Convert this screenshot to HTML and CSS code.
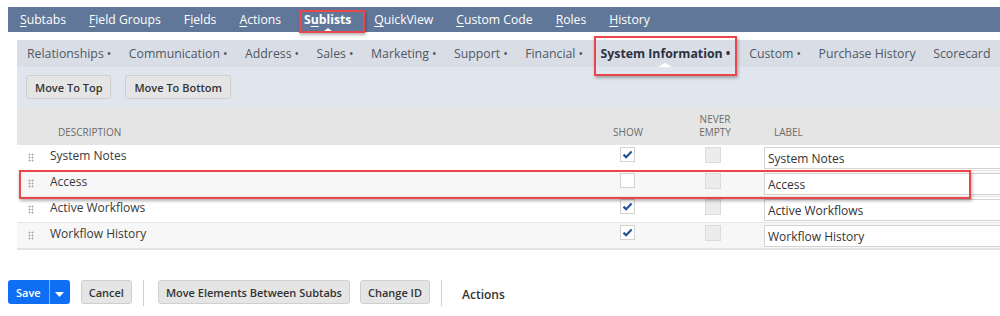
FILE: index.html
```html
<!DOCTYPE html>
<html lang="en">

<head>
    <meta charset="UTF-8">
    <meta name="viewport" content="width=device-width, initial-scale=1.0">
    <title>Sublists</title>
    <link rel="stylesheet" href="styles.css">
</head>

<body>

    <div class="tabs">
        <a class="tab"><u>S</u>ubtabs</a>
        <a class="tab"><u>F</u>ield Groups</a>
        <a class="tab">F<u>i</u>elds</a>
        <a class="tab"><u>A</u>ctions</a>
        <a class="tab active marked">S<u>u</u>blists</a>
        <a class="tab"><u>Q</u>uickView</a>
        <a class="tab"><u>C</u>ustom Code</a>
        <a class="tab"><u>R</u>oles</a>
        <a class="tab"><u>H</u>istory</a>
    </div>

    <div class="panel">
        <div class="subtabs">
            <span class="subtab">Relationships<i>&bull;</i></span>
            <span class="subtab">Communication<i>&bull;</i></span>
            <span class="subtab">Address<i>&bull;</i></span>
            <span class="subtab">Sales<i>&bull;</i></span>
            <span class="subtab">Marketing<i>&bull;</i></span>
            <span class="subtab">Support<i>&bull;</i></span>
            <span class="subtab">Financial<i>&bull;</i></span>
            <span class="subtab active marked">System Information<i>&bull;</i></span>
            <span class="subtab">Custom<i>&bull;</i></span>
            <span class="subtab">Purchase History</span>
            <span class="subtab">Scorecard</span>
        </div>
        <div class="toolbar">
            <button class="btn">Move To Top</button>
            <button class="btn">Move To Bottom</button>
        </div>

        <div class="grid">
            <table>
                <thead>
                    <tr>
                        <th class="col-drag"></th>
                        <th class="col-desc">Description</th>
                        <th class="col-show">Show</th>
                        <th class="col-never">Never<br>Empty</th>
                        <th class="col-label">Label</th>
                    </tr>
                </thead>
                <tbody>
                    <tr>
                        <td class="col-drag"><span class="handle"></span></td>
                        <td>System Notes</td>
                        <td class="col-show"><span class="check on"></span></td>
                        <td class="col-never"><span class="check off"></span></td>
                        <td><input class="label-input" type="text" value="System Notes"></td>
                    </tr>
                    <tr class="alt">
                        <td class="col-drag"><span class="handle"></span></td>
                        <td>Access</td>
                        <td class="col-show"><span class="check"></span></td>
                        <td class="col-never"><span class="check off"></span></td>
                        <td><input class="label-input" type="text" value="Access"></td>
                    </tr>
                    <tr>
                        <td class="col-drag"><span class="handle"></span></td>
                        <td>Active Workflows</td>
                        <td class="col-show"><span class="check on"></span></td>
                        <td class="col-never"><span class="check off"></span></td>
                        <td><input class="label-input" type="text" value="Active Workflows"></td>
                    </tr>
                    <tr class="alt">
                        <td class="col-drag"><span class="handle"></span></td>
                        <td>Workflow History</td>
                        <td class="col-show"><span class="check on"></span></td>
                        <td class="col-never"><span class="check off"></span></td>
                        <td><input class="label-input" type="text" value="Workflow History"></td>
                    </tr>
                </tbody>
            </table>
            <div class="row-mark"></div>
        </div>
    </div>

    <div class="actions">
        <div class="save">
            <button class="save-main">Save</button>
            <button class="save-arrow"><svg width="9" height="5" viewBox="0 0 9 5"><path d="M0 0h9L4.5 5z" fill="#fff"/></svg></button>
        </div>
        <button class="btn">Cancel</button>
        <span class="sep"></span>
        <button class="btn">Move Elements Between Subtabs</button>
        <button class="btn">Change ID</button>
        <span class="sep"></span>
        <span class="menu">Actions</span>
    </div>

</body>

</html>
```

FILE: styles.css
```css
body {
    font-family: 'Open Sans', 'Liberation Sans', sans-serif;
    margin: 0;
    background-color: #fff;
    color: #333;
    width: 1000px;
    height: 316px;
    overflow: hidden;
}

/* top tabs */
.tabs {
    display: flex;
    margin: 7px 0 0 8px;
    height: 25px;
    padding-left: 0.5px;
    background-color: #607799;
    white-space: nowrap;
}

.tab {
    position: relative;
    padding: 0 11.5px;
    font-size: 12.2px;
    line-height: 25px;
    color: #fff;
}

.tab u {
    text-decoration-thickness: 1px;
    text-underline-offset: 2px;
}

.tab.active {
    font-weight: bold;
}

.tab.active::before {
    content: '';
    position: absolute;
    left: 50%;
    bottom: 0;
    margin-left: -5px;
    border-left: 5px solid transparent;
    border-right: 5px solid transparent;
    border-bottom: 4px solid #fff;
}

.marked::after {
    content: '';
    position: absolute;
    border: 2px solid #e9474b;
    box-shadow: 1px 2px 3px rgba(0, 0, 0, 0.3);
}

.tab.marked::after {
    left: 6px;
    right: -2px;
    top: 3px;
    bottom: -1px;
}

/* panel */
.panel {
    margin: 8px 0 0 17px;
    width: 1100px;
}

.subtabs {
    display: flex;
    height: 27px;
    padding-left: 10px;
    background-color: #d9dee6;
    white-space: nowrap;
}

.subtab {
    position: relative;
    margin-right: 17.5px;
    font-size: 12.3px;
    line-height: 27px;
    color: #505863;
}

.subtab i {
    font-style: normal;
    font-size: 12px;
    margin-left: 3px;
}

.subtab.active {
    font-weight: bold;
    color: #2b3240;
    margin-right: 19px;
}

.subtab.active::before {
    content: '';
    position: absolute;
    left: 50%;
    bottom: 0;
    margin-left: -7px;
    border-left: 7px solid transparent;
    border-right: 7px solid transparent;
    border-bottom: 4px solid #fff;
}

.subtab.marked::after {
    left: -7px;
    right: -7px;
    top: -4px;
    bottom: -9px;
}

.toolbar {
    display: flex;
    gap: 14px;
    padding: 8px 9px 9px;
    background-color: #e1e6ee;
}

.btn {
    font-family: inherit;
    font-size: 11px;
    font-weight: 600;
    color: #333;
    height: 24px;
    padding: 0 7px;
    background-color: #e5e5e5;
    border: 1px solid #cfcfcf;
    border-radius: 3px;
}

.toolbar .btn {
    padding: 0 8px;
}

/* grid */
.grid {
    position: relative;
}

table {
    width: 100%;
    border-collapse: collapse;
    font-size: 12px;
    border-bottom: 2px solid #e3e3e3;
}

th {
    height: 31px;
    padding: 0 0 6px;
    background-color: #e5e5e5;
    font-size: 10px;
    font-weight: normal;
    color: #6b6b6b;
    text-transform: uppercase;
    text-align: left;
    vertical-align: bottom;
    line-height: 13px;
}

td {
    height: 25px;
    padding: 0;
    border-bottom: 1px solid #e6e6e6;
    vertical-align: top;
    line-height: 21px;
    color: #3a3a3a;
}

tr.alt td {
    background-color: #f7f7f7;
}

.col-drag {
    width: 33px;
}

.col-desc {
    width: 542px;
}

th.col-desc {
    padding-left: 8px;
    width: 534px;
}

.col-show,
.col-never {
    text-align: center;
}

.col-show {
    width: 70px;
}

th.col-show {
    padding-left: 2px;
    width: 68px;
}

.col-never {
    width: 102px;
}

th.col-never {
    padding-left: 4px;
    width: 98px;
}

th.col-label {
    padding-left: 10px;
}

.handle {
    display: block;
    width: 6px;
    height: 9px;
    margin: 8px 0 0 11px;
    background-image: radial-gradient(circle, #a8a8a8 0.9px, transparent 1.1px);
    background-size: 3px 3px;
}

.check {
    display: inline-block;
    width: 15px;
    height: 15px;
    margin-top: 2px;
    border: 1px solid #d2d2d2;
    background-color: #fff;
    box-sizing: border-box;
    vertical-align: top;
}

.check.on {
    background: #fff url("data:image/svg+xml,%3Csvg xmlns='http://www.w3.org/2000/svg' width='11' height='11' viewBox='0 0 11 11'%3E%3Cpath d='M1.5 5.6l2.6 2.6L9.6 2.4' fill='none' stroke='%23255392' stroke-width='2.2'/%3E%3C/svg%3E") center no-repeat;
}

.check.off {
    width: 16px;
    height: 16px;
    background-color: #ececec;
    border-color: #dcdcdc;
}

.label-input {
    display: block;
    box-sizing: border-box;
    width: 100%;
    height: 22px;
    margin-top: 2px;
    padding: 0 3px;
    border: 1px solid #d3d3d3;
    font-family: inherit;
    font-size: 12px;
    color: #333;
    background-color: #fff;
}

.row-mark {
    position: absolute;
    left: 2px;
    top: 62px;
    width: 948px;
    height: 25px;
    border: 2px solid #e9474b;
    box-shadow: 1px 2px 3px rgba(0, 0, 0, 0.3);
    pointer-events: none;
}

/* bottom actions */
.actions {
    display: flex;
    align-items: center;
    gap: 10px;
    margin: 28px 0 0 8px;
}

.save {
    display: flex;
    height: 24px;
    margin-right: 1px;
    border-radius: 3px;
    overflow: hidden;
}

.save button {
    border: none;
    background-color: #0e6ef4;
    color: #fff;
    font-family: inherit;
    font-size: 11px;
    font-weight: 600;
}

.save-main {
    padding: 0 8px;
    border-right: 1px solid #7fb0f8 !important;
}

.save-arrow {
    width: 20px;
    padding: 0;
}

.sep {
    width: 1px;
    height: 26px;
    margin: 2px 4px 0 1px;
    background-color: #cfcfcf;
}

.menu {
    font-size: 12px;
    font-weight: 600;
    color: #333;
    margin: 4px 0 0 6px;
}
```
